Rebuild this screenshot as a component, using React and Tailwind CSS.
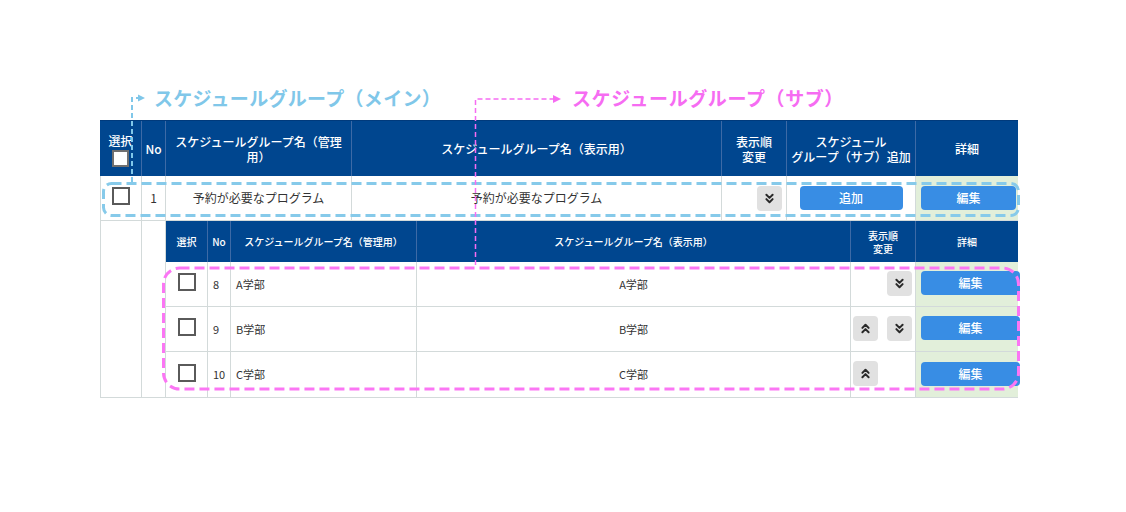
import React from "react";
import { ChevronsDown, ChevronsUp } from "lucide-react";

const FONT = "font-['Noto_Sans_CJK_JP','Noto_Sans',sans-serif]";

function Box({ className = "" }) {
  return <div className={`w-[18px] h-[18px] border-2 border-[#5a5a5a] bg-white ${className}`} />;
}

function Chev({ up }) {
  return (
    <div className="w-[25px] h-[25px] rounded-[4px] bg-[#e1e1e1] flex items-center justify-center">
      {up ? (
        <ChevronsUp size={15} strokeWidth={3.2} color="#2a2a2a" />
      ) : (
        <ChevronsDown size={15} strokeWidth={3.2} color="#2a2a2a" />
      )}
    </div>
  );
}

function BlueBtn({ children, w }) {
  return (
    <div
      className={`${w} shrink-0 h-[24px] rounded-[4px] bg-[#388de4] text-white text-[12px] font-medium flex items-center justify-center`}
    >
      {children}
    </div>
  );
}

const hb = "border-r border-[#3d6aa6]";
const bb = "border-r border-[#d3dada]";

const subRows = [
  { no: 8, name: "A学部", up: false, down: true },
  { no: 9, name: "B学部", up: true, down: true },
  { no: 10, name: "C学部", up: true, down: false },
];

export default function App() {
  return (
    <div className={`relative w-[1126px] h-[512px] bg-white overflow-hidden ${FONT}`}>
      <div className="pt-[120px] pl-[100px]">
        <div className="w-[918px]">
          {/* main header */}
          <div className="flex h-[56px] bg-[#00468f] text-white text-[12px] font-medium leading-[15px] border-t border-[#003a7c]">
            <div className={`w-[42px] ${hb} flex flex-col items-center justify-center gap-[2px] pt-[2px]`}>
              <span>選択</span>
              <div className="w-[17px] h-[17px] bg-white border-2 border-[#707070]" />
            </div>
            <div className={`w-[24px] ${hb} flex items-center justify-center`}>No</div>
            <div className={`w-[186px] ${hb} flex items-center justify-center text-center px-[6px]`}>
              スケジュールグループ名（管理用）
            </div>
            <div className={`w-[370px] ${hb} flex items-center justify-center`}>
              スケジュールグループ名（表示用）
            </div>
            <div className={`w-[65px] ${hb} flex items-center justify-center text-center`}>
              表示順
              <br />
              変更
            </div>
            <div className={`w-[129px] ${hb} flex items-center justify-center text-center`}>
              スケジュール
              <br />
              グループ（サブ）追加
            </div>
            <div className="w-[102px] flex items-center justify-center">詳細</div>
          </div>

          {/* main row */}
          <div className="flex h-[45px] border-b border-l border-[#d3dada] text-[12px] text-[#333]">
            <div className={`w-[41px] ${bb} flex items-center justify-center pb-[4px]`}>
              <Box />
            </div>
            <div className={`w-[24px] ${bb} flex items-center justify-center`}>1</div>
            <div className={`w-[186px] ${bb} flex items-center justify-center`}>予約が必要なプログラム</div>
            <div className={`w-[370px] ${bb} flex items-center justify-center`}>予約が必要なプログラム</div>
            <div className={`w-[65px] ${bb} flex items-center justify-end pr-[4px]`}>
              <Chev />
            </div>
            <div className={`w-[129px] ${bb} flex items-center justify-center`}>
              <BlueBtn w="w-[103px]">追加</BlueBtn>
            </div>
            <div className="w-[102px] bg-[#e2efda] flex items-center pl-[5px]">
              <BlueBtn w="w-[95px]">編集</BlueBtn>
            </div>
          </div>

          {/* sub block */}
          <div className="flex border-l border-b border-[#d3dada]">
            <div className={`w-[41px] ${bb}`} />
            <div className={`w-[24px] ${bb}`} />
            <div className="w-[852px]">
              <div className="flex h-[41px] bg-[#00468f] text-white text-[10px] font-medium leading-[13px]">
                <div className={`w-[42px] ${hb} flex items-center justify-center`}>選択</div>
                <div className={`w-[23px] ${hb} flex items-center justify-center`}>No</div>
                <div className={`w-[186px] ${hb} flex items-center justify-center`}>
                  スケジュールグループ名（管理用）
                </div>
                <div className={`w-[434px] ${hb} flex items-center justify-center`}>
                  スケジュールグループ名（表示用）
                </div>
                <div className={`w-[65px] ${hb} flex items-center justify-center text-center`}>
                  表示順
                  <br />
                  変更
                </div>
                <div className="w-[102px] flex items-center justify-center">詳細</div>
              </div>
              {subRows.map((r, i) => (
                <div
                  key={r.no}
                  className={`flex h-[45px] text-[11px] text-[#333] ${i < 2 ? "border-b border-[#d3dada]" : ""}`}
                >
                  <div className={`w-[42px] ${bb} flex items-center justify-center pb-[4px]`}>
                    <Box />
                  </div>
                  <div className={`w-[23px] ${bb} flex items-center pl-[5px]`}>{r.no}</div>
                  <div className={`w-[186px] ${bb} flex items-center pl-[5px]`}>{r.name}</div>
                  <div className={`w-[434px] ${bb} flex items-center justify-center`}>{r.name}</div>
                  <div className={`w-[65px] ${bb} flex items-center justify-between pl-[2px] pr-[3px] pb-[2px]`}>
                    {r.up ? <Chev up /> : <div className="w-[25px]" />}
                    {r.down ? <Chev /> : <div className="w-[25px]" />}
                  </div>
                  <div className="w-[102px] bg-[#e2efda] flex items-center pl-[5px] pb-[2px] overflow-visible">
                    <BlueBtn w="w-[99px]">編集</BlueBtn>
                  </div>
                </div>
              ))}
            </div>
          </div>
        </div>
      </div>

      {/* annotation labels */}
      <div className="absolute left-[154px] top-[85px] text-[19px] leading-[25px] tracking-[0.3px] font-bold text-[#80c7e9]">
        スケジュールグループ（メイン）
      </div>
      <div className="absolute left-[572px] top-[85px] text-[19px] leading-[25px] tracking-[0.6px] font-bold text-[#f66cf2]">
        スケジュールグループ（サブ）
      </div>

      {/* annotation drawings */}
      <svg className="absolute left-0 top-0 pointer-events-none" width="1126" height="512">
        <path d="M132 182 V98 H139" fill="none" stroke="#80c7e9" strokeWidth="2" strokeDasharray="5 3" />
        <polygon points="138,94.5 145,98 138,101.5" fill="#80c7e9" />
        <rect x="103.5" y="183.5" width="915" height="32" rx="8" fill="none" stroke="#86caea" strokeWidth="3" strokeDasharray="10 5" />

        <path d="M475.5 265 V99 H554" fill="none" stroke="#f66cf2" strokeWidth="1.5" strokeDasharray="5 3" />
        <polygon points="553,95 561,99 553,103" fill="#f66cf2" />
        <rect x="163.5" y="268" width="855" height="121" rx="16" fill="none" stroke="#fb76f4" strokeWidth="3" strokeDasharray="10 5" />
      </svg>
    </div>
  );
}
